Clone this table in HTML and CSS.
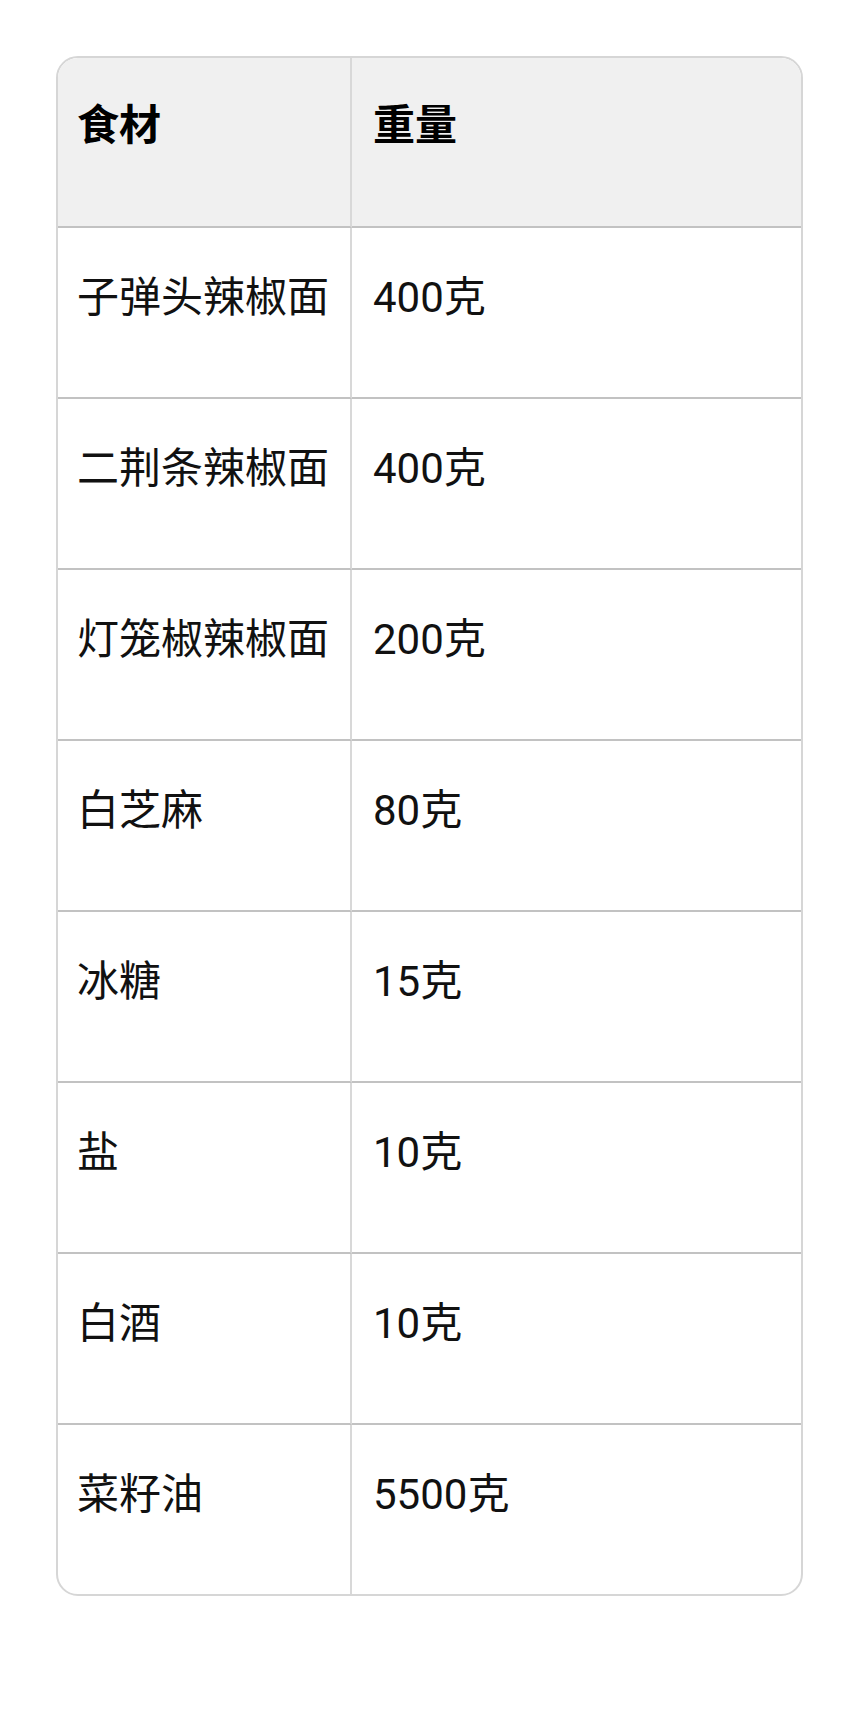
FILE: index.html
```html
<!DOCTYPE html>
<html lang="zh-CN">
<head>
<meta charset="utf-8">
<title>食材</title>
<link rel="stylesheet" href="styles.css">
</head>
<body>
<div class="table-wrap">
  <table class="recipe">
    <colgroup>
      <col class="col-name">
      <col class="col-weight">
    </colgroup>
    <thead>
      <tr><th>食材</th><th>重量</th></tr>
    </thead>
    <tbody>
      <tr><td>子弹头辣椒面</td><td>400克</td></tr>
      <tr><td>二荆条辣椒面</td><td>400克</td></tr>
      <tr><td>灯笼椒辣椒面</td><td>200克</td></tr>
      <tr><td>白芝麻</td><td>80克</td></tr>
      <tr><td>冰糖</td><td>15克</td></tr>
      <tr><td>盐</td><td>10克</td></tr>
      <tr><td>白酒</td><td>10克</td></tr>
      <tr><td>菜籽油</td><td>5500克</td></tr>
    </tbody>
  </table>
</div>
</body>
</html>
```
FILE: styles.css
```css
html, body {
  margin: 0;
  padding: 0;
  background: #ffffff;
}
body {
  padding: 56px 0 0 56px;
  font-family: "Roboto", "Noto Sans CJK SC", sans-serif;
  color: #111111;
}
.table-wrap {
  box-sizing: border-box;
  width: 747px;
  border: 2px solid #d6d6d6;
  border-radius: 22px;
  overflow: hidden;
}
.recipe {
  width: 100%;
  table-layout: fixed;
  border-collapse: separate;
  border-spacing: 0;
  font-size: 42px;
  line-height: 60px;
}
.col-name { width: 294px; }
.recipe th,
.recipe td {
  text-align: left;
  vertical-align: top;
  padding: 40px 19px 69px 19px;
  border-bottom: 2px solid #c2c2c2;
  white-space: nowrap;
}
.recipe td:last-child,
.recipe th:last-child {
  padding-left: 21px;
}
.recipe th {
  background: #f0f0f0;
  font-weight: 700;
  color: #000000;
  padding-top: 38px;
  padding-bottom: 70px;
}
.recipe th:first-child,
.recipe td:first-child {
  border-right: 2px solid #d8d8d8;
}
.recipe tbody tr:last-child td {
  border-bottom: none;
}
```
